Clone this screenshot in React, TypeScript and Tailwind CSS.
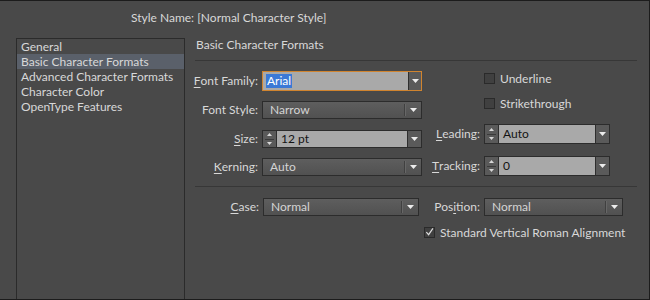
import React from "react";

const Arrow = () => (
  <svg width="7" height="4" viewBox="0 0 7 4">
    <path d="M0 0H7L3.5 4Z" fill="#ececec" />
  </svg>
);

const Spinner = () => (
  <div className="w-[14px] self-stretch bg-[#5a5a5a] border-r border-[#2e2e2e] flex flex-col">
    <div className="flex-1 flex items-center justify-center">
      <svg width="5" height="3" viewBox="0 0 5 3">
        <path d="M0 3H5L2.5 0Z" fill="#d8d8d8" />
      </svg>
    </div>
    <div className="h-px mx-[2px] bg-[#3a3a3a]" />
    <div className="flex-1 flex items-center justify-center">
      <svg width="5" height="3" viewBox="0 0 5 3">
        <path d="M0 0H5L2.5 3Z" fill="#d8d8d8" />
      </svg>
    </div>
  </div>
);

function Dropdown({ value, className }: { value: string; className: string }) {
  return (
    <div
      className={
        "h-[18px] border border-[#2c2c2c] bg-gradient-to-b from-[#5e5e5e] to-[#515151] flex items-center " +
        className
      }
    >
      <span className="flex-1 pl-[7px] text-[#d4d4d4] leading-[16px]">{value}</span>
      <div className="w-px h-[12px] bg-[#404040]" />
      <div className="w-px h-[12px] bg-[#676767]" />
      <div className="w-[15px] flex items-center justify-center">
        <Arrow />
      </div>
    </div>
  );
}

function Combo({
  value,
  className,
  spinner,
}: {
  value: string;
  className: string;
  spinner?: boolean;
}) {
  return (
    <div className={"border border-[#2c2c2c] flex items-stretch " + className}>
      {spinner && <Spinner />}
      <div className="flex-1 bg-[#a9a9a9] text-[#141414] pl-[4px] flex items-center">{value}</div>
      <div className="w-[14px] bg-[#5a5a5a] border-l border-[#2e2e2e] flex items-center justify-center">
        <Arrow />
      </div>
    </div>
  );
}

function Check({ checked, label }: { checked?: boolean; label: string }) {
  return (
    <div className="flex items-center h-[11px] whitespace-nowrap">
      <div className="w-[11px] h-[11px] border border-[#2a2a2a] bg-[#404040] flex items-center justify-center">
        {checked && (
          <svg width="10" height="10" viewBox="0 0 10 10" className="-mt-[1px]">
            <path d="M1.5 5.2L4 8L8.8 1" stroke="#dcdcdc" strokeWidth="1.3" fill="none" />
          </svg>
        )}
      </div>
      <span className="ml-[5px] text-[#d8d8d8] leading-[14px]">{label}</span>
    </div>
  );
}

const U = ({ children }: { children: React.ReactNode }) => (
  <span className="underline underline-offset-[2px] decoration-[#d8d8d8]">{children}</span>
);

function Label({ children, className }: { children: React.ReactNode; className: string }) {
  return <div className={"flex justify-end whitespace-nowrap " + className}>{children}</div>;
}

export default function App() {
  return (
    <div
      className="w-[650px] h-[300px] bg-[#494949] border-t border-r border-b border-[#1c1c1c] overflow-hidden text-[12px] text-[#d8d8d8]"
      style={{ fontFamily: "Lato, 'Open Sans', sans-serif" }}
    >
      <div className="pt-[9px] pl-[131px] h-[25px] leading-[16px]">
        Style Name: [Normal Character Style]
      </div>
      <div className="flex mt-[12px]">
        <div className="ml-[16px] w-[169px] h-[280px] border-l border-t border-r border-[#2b2b2b] whitespace-nowrap">
          <div className="h-[15px] leading-[15px] pl-[4px]">General</div>
          <div className="h-[15px] leading-[15px] pl-[4px] bg-[#5a606a]">Basic Character Formats</div>
          <div className="h-[15px] leading-[15px] pl-[4px]">Advanced Character Formats</div>
          <div className="h-[15px] leading-[15px] pl-[4px]">Character Color</div>
          <div className="h-[15px] leading-[15px] pl-[4px]">OpenType Features</div>
        </div>
        <div className="ml-[10px] w-[442px]">
          <div className="h-[14px] leading-[14px] pl-[1px]">Basic Character Formats</div>
          <div className="mt-[8px] border-t border-[#373737]" />
          <div className="flex">
            <div className="w-[227px] flex flex-col">
              <div className="mt-[10px] flex items-center h-[20px]">
                <Label className="w-[63px]">
                  <U>F</U>ont Family:
                </Label>
                <div className="ml-[4px] w-[160px] h-[20px] border border-[#d0842f] flex items-stretch">
                  <div className="flex-1 bg-[#a9a9a9] pl-[3px] flex items-center">
                    <span className="bg-[#3b79d6] text-white leading-[14px] px-[1px]">Arial</span>
                  </div>
                  <div className="w-[13px] bg-[#5a5a5a] border-l border-[#2e2e2e] flex items-center justify-center">
                    <Arrow />
                  </div>
                </div>
              </div>
              <div className="mt-[10px] flex items-center h-[18px]">
                <Label className="w-[63px]">Font Style:</Label>
                <Dropdown value="Narrow" className="ml-[4px] w-[160px]" />
              </div>
              <div className="mt-[11px] flex items-center h-[18px]">
                <Label className="w-[63px]">
                  <U>S</U>ize:
                </Label>
                <Combo value="12 pt" spinner className="ml-[4px] w-[160px] h-[18px]" />
              </div>
              <div className="mt-[10px] flex items-center h-[18px]">
                <Label className="w-[63px]">
                  <U>K</U>erning:
                </Label>
                <Dropdown value="Auto" className="ml-[4px] w-[160px]" />
              </div>
            </div>
            <div className="flex flex-col">
              <div className="mt-[12px] ml-[62px]">
                <Check label="Underline" />
              </div>
              <div className="mt-[14px] ml-[62px]">
                <Check label="Strikethrough" />
              </div>
              <div className="mt-[15px] flex items-center h-[20px]">
                <Label className="w-[58px]">
                  <U>L</U>eading:
                </Label>
                <Combo value="Auto" spinner className="ml-[4px] w-[126px] h-[20px]" />
              </div>
              <div className="mt-[12px] flex items-center h-[20px]">
                <Label className="w-[58px]">
                  <U>T</U>racking:
                </Label>
                <Combo value="0" spinner className="ml-[4px] w-[126px] h-[20px]" />
              </div>
            </div>
          </div>
          <div className="mt-[10px] border-t border-[#373737]" />
          <div className="mt-[11px] flex items-center h-[18px]">
            <Label className="w-[64px]">
              <U>C</U>ase:
            </Label>
            <Dropdown value="Normal" className="ml-[4px] w-[156px]" />
            <Label className="w-[61px]">
              Pos<U>i</U>tion:
            </Label>
            <Dropdown value="Normal" className="ml-[4px] w-[139px]" />
          </div>
          <div className="mt-[11px] ml-[229px]">
            <Check checked label="Standard Vertical Roman Alignment" />
          </div>
        </div>
      </div>
    </div>
  );
}
